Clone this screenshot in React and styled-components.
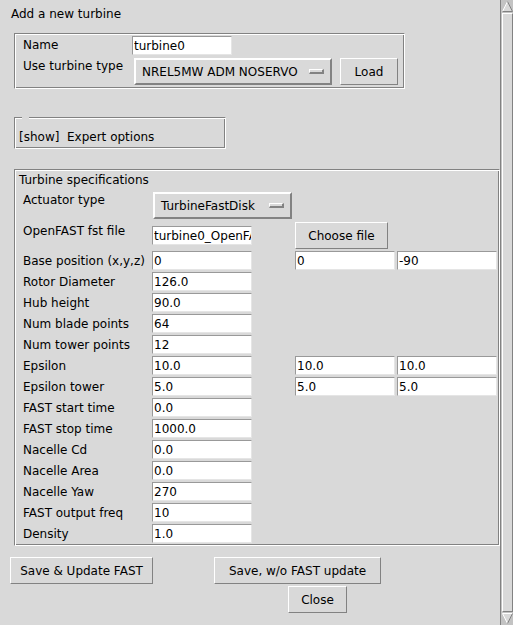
import React from 'react';
import styled, { createGlobalStyle } from 'styled-components';

const Global = createGlobalStyle`
  html, body { margin: 0; padding: 0; background: #d9d9d9; }
  body {
    font-family: "DejaVu Sans", "Liberation Sans", sans-serif;
    font-size: 12px;
    color: #000;
  }
  * { box-sizing: border-box; }
`;

const Window = styled.div`
  display: flex;
  width: 513px;
  height: 625px;
  overflow: hidden;
  background: #d9d9d9;
`;

const Content = styled.div`
  width: 500px;
  flex: none;
  display: flex;
  flex-direction: column;
  align-items: flex-start;
`;

const Title = styled.div`
  margin: 7px 0 0 11px;
  line-height: 14px;
  height: 14px;
  white-space: pre;
`;

const Groove = styled.div`
  position: relative;
  border: 1px solid;
  border-color: #828282 #ffffff #ffffff #828282;
  box-shadow: inset 1px 1px 0 #ffffff, inset -1px -1px 0 #828282;
  margin-left: 14px;
  margin-top: ${(p) => p.$top}px;
  width: ${(p) => p.$w}px;
  height: ${(p) => p.$h}px;
`;

const TypeFrame = styled(Groove)`
  padding: 2px 0 0 8px;
`;

const ExpertFrame = styled(Groove)`
  padding: 12px 0 0 4px;
  line-height: 14px;
  white-space: pre;
  &::before {
    content: "";
    position: absolute;
    top: -1px;
    left: 7px;
    width: 7px;
    height: 2px;
    background: #d9d9d9;
  }
`;

const SpecFrame = styled(Groove)`
  padding: 0;
`;

const FrameTitle = styled.div`
  margin: 3px 0 0 4px;
  line-height: 14px;
  height: 14px;
`;

const FlexRow = styled.div`
  display: flex;
  align-items: center;
  margin-top: ${(p) => p.$mt || 0}px;
  height: ${(p) => p.$h}px;
`;

const SpecRow = styled.div`
  display: grid;
  grid-template-columns: 129px 143px 102px 100px;
  align-items: center;
  padding-left: 8px;
  margin-top: ${(p) => p.$mt || 0}px;
  height: ${(p) => p.$h || 21}px;
`;

const Label = styled.div`
  width: ${(p) => (p.$w ? `${p.$w}px` : 'auto')};
  flex: none;
  line-height: 14px;
  white-space: pre;
  align-self: ${(p) => (p.$top !== undefined ? 'flex-start' : 'center')};
  margin-top: ${(p) => (p.$top !== undefined ? p.$top : 0)}px;
`;

const Entry = styled.input`
  width: 100px;
  height: 19px;
  margin: 0;
  padding: 0 0 0 1px;
  border: 1px solid;
  border-color: #999999 #e5e5e5 #e5e5e5 #999999;
  background: #ffffff;
  font-family: "DejaVu Sans", "Liberation Sans", sans-serif;
  font-size: 12px;
  line-height: 14px;
  color: #000;
  outline: none;
  flex: none;
`;

const Button = styled.button`
  width: ${(p) => p.$w}px;
  height: 27px;
  margin: 0 0 0 ${(p) => p.$ml || 0}px;
  padding: 0;
  border: 1px solid;
  border-color: #ffffff #828282 #828282 #ffffff;
  background: #d9d9d9;
  font-family: "DejaVu Sans", "Liberation Sans", sans-serif;
  font-size: 12px;
  line-height: 14px;
  color: #000;
  flex: none;
  cursor: default;
  white-space: pre;
`;

const MenuButton = styled.div`
  width: ${(p) => p.$w}px;
  height: 27px;
  margin-left: ${(p) => p.$ml || 0}px;
  border: 2px solid;
  border-color: #ffffff #828282 #828282 #ffffff;
  background: #d9d9d9;
  display: flex;
  align-items: center;
  justify-content: space-between;
  padding: 0 6px;
  line-height: 14px;
  white-space: pre;
  flex: none;
`;

const Indicator = styled.span`
  width: 15px;
  height: 5px;
  border: 1px solid;
  border-color: #ffffff #828282 #828282 #ffffff;
  border-width: 1px 2px 2px 1px;
  background: #d9d9d9;
  flex: none;
`;

const ButtonRow = styled.div`
  display: flex;
  margin-top: ${(p) => p.$mt}px;
  padding-left: ${(p) => p.$pl}px;
`;

const ScrollBar = styled.div`
  width: 13px;
  height: 625px;
  flex: none;
  display: flex;
  flex-direction: column;
  background: #c3c3c3;
  border-left: 1px solid #828282;
  padding: 1px 0 1px 1px;
`;

const Slider = styled.div`
  flex: 1;
  margin: 1px 0;
  background: #d9d9d9;
  border: 1px solid;
  border-color: #ffffff #828282 #828282 #ffffff;
`;

const Arrow = ({ down }) => (
  <svg width="11" height="11" viewBox="0 0 11 11" style={{ display: 'block', flex: 'none' }}>
    {down ? (
      <>
        <polygon points="0.5,0.5 10.5,0.5 5.5,10.5" fill="#d9d9d9" />
        <line x1="0.5" y1="0.5" x2="10.5" y2="0.5" stroke="#ffffff" />
        <line x1="0.5" y1="0.5" x2="5.5" y2="10.5" stroke="#ffffff" />
        <line x1="10.5" y1="0.5" x2="5.5" y2="10.5" stroke="#828282" />
      </>
    ) : (
      <>
        <polygon points="5.5,0.5 0.5,10.5 10.5,10.5" fill="#d9d9d9" />
        <line x1="5.5" y1="0.5" x2="0.5" y2="10.5" stroke="#ffffff" />
        <line x1="5.5" y1="0.5" x2="10.5" y2="10.5" stroke="#828282" />
        <line x1="0.5" y1="10.5" x2="10.5" y2="10.5" stroke="#828282" />
      </>
    )}
  </svg>
);

const specRows = [
  ['Base position (x,y,z)', '0', '0', '-90'],
  ['Rotor Diameter', '126.0'],
  ['Hub height', '90.0'],
  ['Num blade points', '64'],
  ['Num tower points', '12'],
  ['Epsilon', '10.0', '10.0', '10.0'],
  ['Epsilon tower', '5.0', '5.0', '5.0'],
  ['FAST start time', '0.0'],
  ['FAST stop time', '1000.0'],
  ['Nacelle Cd', '0.0'],
  ['Nacelle Area', '0.0'],
  ['Nacelle Yaw', '270'],
  ['FAST output freq', '10'],
  ['Density', '1.0'],
];

export default function App() {
  return (
    <>
      <Global />
      <Window>
        <Content>
          <Title>Add a new turbine</Title>

          <TypeFrame $top={12} $w={391} $h={56}>
            <FlexRow $h={19}>
              <Label $w={109} $top={2}>Name</Label>
              <Entry defaultValue="turbine0" />
            </FlexRow>
            <FlexRow $h={27} $mt={3}>
              <Label $w={109} $top={1}>Use turbine type</Label>
              <MenuButton $w={198} $ml={2}>
                NREL5MW ADM NOSERVO
                <Indicator />
              </MenuButton>
              <Button $w={58} $ml={8}>Load</Button>
            </FlexRow>
          </TypeFrame>

          <ExpertFrame $top={28} $w={212} $h={32}>[show]  Expert options</ExpertFrame>

          <SpecFrame $top={20} $w={486} $h={377}>
            <FrameTitle>Turbine specifications</FrameTitle>
            <SpecRow $mt={5} $h={27}>
              <Label $top={1}>Actuator type</Label>
              <MenuButton $w={139} $ml={1}>
                TurbineFastDisk
                <Indicator />
              </MenuButton>
            </SpecRow>
            <SpecRow $mt={3} $h={27}>
              <Label $top={2}>OpenFAST fst file</Label>
              <Entry defaultValue="turbine0_OpenFAST.fst" />
              <Button $w={93}>Choose file</Button>
            </SpecRow>
            <div style={{ height: 1 }} />
            {specRows.map(([name, a, b, c]) => (
              <SpecRow key={name}>
                <Label>{name}</Label>
                <Entry defaultValue={a} />
                {b !== undefined && <Entry defaultValue={b} />}
                {c !== undefined && <Entry defaultValue={c} />}
              </SpecRow>
            ))}
          </SpecFrame>

          <ButtonRow $mt={11} $pl={10}>
            <Button $w={143}>Save &amp; Update FAST</Button>
            <Button $w={167} $ml={61}>Save, w/o FAST update</Button>
          </ButtonRow>
          <ButtonRow $mt={2} $pl={288}>
            <Button $w={59}>Close</Button>
          </ButtonRow>
        </Content>
        <ScrollBar>
          <Arrow />
          <Slider />
          <Arrow down />
        </ScrollBar>
      </Window>
    </>
  );
}
